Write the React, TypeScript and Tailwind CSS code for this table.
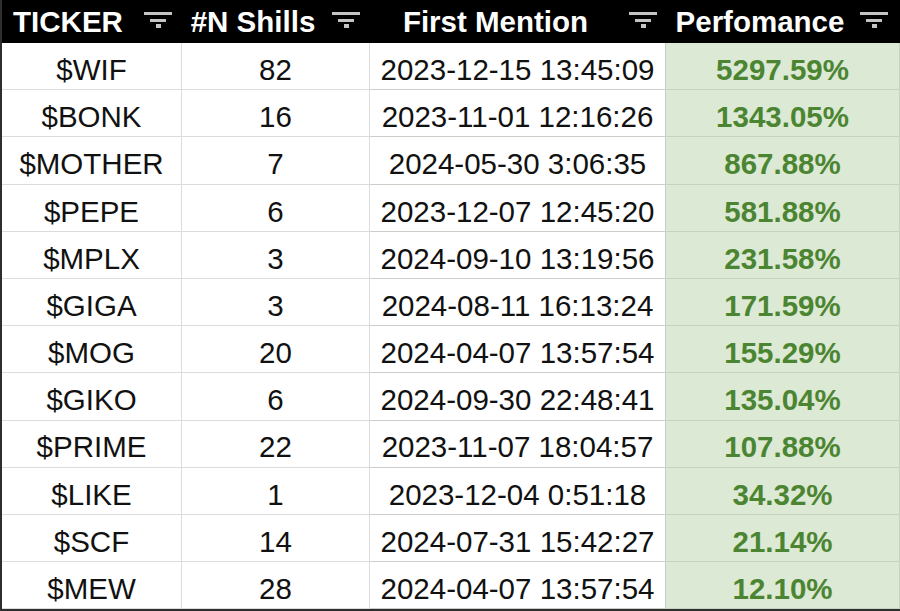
import React from 'react';

type Row = {
  ticker: string;
  shills: number;
  first: string;
  perf: string;
};

const rows: Row[] = [
  { ticker: '$WIF', shills: 82, first: '2023-12-15 13:45:09', perf: '5297.59%' },
  { ticker: '$BONK', shills: 16, first: '2023-11-01 12:16:26', perf: '1343.05%' },
  { ticker: '$MOTHER', shills: 7, first: '2024-05-30 3:06:35', perf: '867.88%' },
  { ticker: '$PEPE', shills: 6, first: '2023-12-07 12:45:20', perf: '581.88%' },
  { ticker: '$MPLX', shills: 3, first: '2024-09-10 13:19:56', perf: '231.58%' },
  { ticker: '$GIGA', shills: 3, first: '2024-08-11 16:13:24', perf: '171.59%' },
  { ticker: '$MOG', shills: 20, first: '2024-04-07 13:57:54', perf: '155.29%' },
  { ticker: '$GIKO', shills: 6, first: '2024-09-30 22:48:41', perf: '135.04%' },
  { ticker: '$PRIME', shills: 22, first: '2023-11-07 18:04:57', perf: '107.88%' },
  { ticker: '$LIKE', shills: 1, first: '2023-12-04 0:51:18', perf: '34.32%' },
  { ticker: '$SCF', shills: 14, first: '2024-07-31 15:42:27', perf: '21.14%' },
  { ticker: '$MEW', shills: 28, first: '2024-04-07 13:57:54', perf: '12.10%' },
];

// sheets-style filter glyph: three stacked bars
const FilterIcon = () => (
  <svg width="28" height="16" viewBox="0 0 28 16" className="shrink-0 mt-[-3px]">
    <rect x="0" y="0" width="28" height="3" fill="#c4c4c4" />
    <rect x="6" y="7" width="16" height="3" fill="#c4c4c4" />
    <rect x="12" y="12" width="5" height="4" fill="#c4c4c4" />
  </svg>
);

const HeaderCell = ({ label, pad, shift }: { label: string; pad: string; shift: string }) => (
  <div className={`flex items-center h-[43px] bg-black ${pad}`}>
    <span className={`flex-1 text-center text-white font-bold text-[29.5px] leading-none whitespace-nowrap ${shift}`}>
      {label}
    </span>
    <FilterIcon />
  </div>
);

const cell = 'h-[47.2px] pt-[8px] flex items-center justify-center border-r border-b text-[29.5px]';

export default function App() {
  return (
    <div
      className="w-[900px] h-[611px] overflow-hidden bg-white border-l-2 border-b-2 border-[#2e2e2e]"
      style={{ fontFamily: '"Liberation Sans", Arial, sans-serif' }}
    >
      <div className="grid grid-cols-[180px_188px_296px_1fr]">
        <HeaderCell label="TICKER" pad="pr-[10px]" shift="mr-[10px]" />
        <HeaderCell label="#N Shills" pad="pr-[10px]" shift="mr-[8px]" />
        <HeaderCell label="First Mention" pad="pr-[9px]" shift="mr-[8px]" />
        <HeaderCell label="Perfomance" pad="pr-[12px]" shift="mr-[6px]" />

        {rows.map((r) => (
          <React.Fragment key={r.ticker}>
            <div className={`${cell} border-[#dcdcdc] text-[#111]`}>{r.ticker}</div>
            <div className={`${cell} border-[#dcdcdc] text-[#111]`}>{r.shills}</div>
            <div className={`${cell} border-[#c9cfc6] text-[#111] whitespace-nowrap`}>{r.first}</div>
            <div className={`${cell} border-[#c6d4bf] bg-[#dce9d5] font-bold text-[#4c8532]`}>{r.perf}</div>
          </React.Fragment>
        ))}
      </div>
    </div>
  );
}
